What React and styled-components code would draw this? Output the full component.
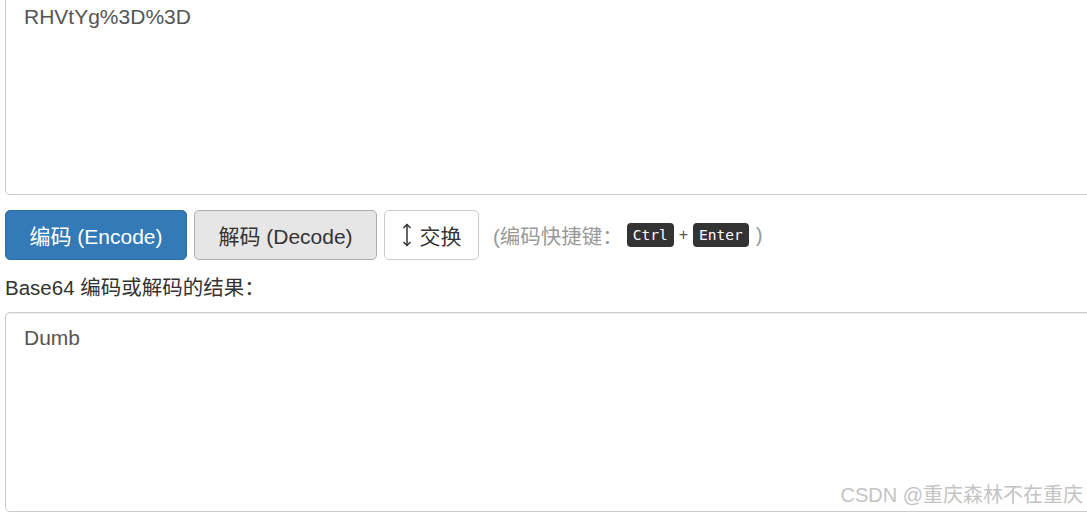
import React from "react";
import styled, { createGlobalStyle } from "styled-components";

const GlobalStyle = createGlobalStyle`
  html, body {
    margin: 0;
    padding: 0;
    background: #fff;
    overflow: hidden;
  }
  body {
    font-family: "Liberation Sans", "Noto Sans CJK SC", sans-serif;
    color: #333;
  }
`;

const Page = styled.div`
  position: relative;
  width: 1087px;
  height: 514px;
  overflow: hidden;
  padding-left: 5px;
  box-sizing: border-box;
`;

const Column = styled.div`
  display: flex;
  flex-direction: column;
  margin-top: -9px;
`;

const Area = styled.textarea`
  display: block;
  width: 1200px;
  height: ${(p) => p.$height}px;
  box-sizing: border-box;
  margin: 0;
  padding: 11px 18px;
  border: 1px solid #ccc;
  border-radius: 5px;
  box-shadow: inset 0 1px 1px rgba(0, 0, 0, 0.075);
  font-family: "Liberation Sans", "Noto Sans CJK SC", sans-serif;
  font-size: 21px;
  line-height: 1.35;
  color: #555;
  resize: none;
  outline: none;
  background: #fff;
`;

const Toolbar = styled.div`
  display: flex;
  align-items: center;
  gap: 7px;
  margin-top: 15px;
`;

const variants = {
  primary: { bg: "#337ab7", border: "#2e6da4", color: "#fff" },
  active: { bg: "#e6e6e6", border: "#adadad", color: "#333" },
  plain: { bg: "#fff", border: "#ccc", color: "#333" },
};

const Button = styled.button`
  display: flex;
  align-items: center;
  justify-content: center;
  gap: 8px;
  height: 50px;
  width: ${(p) => p.$width}px;
  box-sizing: border-box;
  padding: 0;
  border: 1px solid ${(p) => variants[p.$variant].border};
  border-radius: 5px;
  background: ${(p) => variants[p.$variant].bg};
  color: ${(p) => variants[p.$variant].color};
  font-family: "Liberation Sans", "Noto Sans CJK SC", sans-serif;
  font-size: 21px;
  cursor: pointer;
`;

const Hint = styled.span`
  display: flex;
  align-items: center;
  margin-left: 7px;
  font-size: 20.5px;
  color: #999;
`;

const Kbd = styled.kbd`
  display: inline-block;
  padding: 3px 6px 2px;
  margin: 0 4px;
  background: #333;
  color: #fff;
  border-radius: 4px;
  font-family: "DejaVu Sans Mono", "Liberation Mono", monospace;
  font-size: 14.5px;
  line-height: 19px;
`;

const Plus = styled.span`
  font-size: 16px;
  color: #555;
  margin: 0 1px;
`;

const Close = styled.span`
  margin-left: 3px;
`;

const Label = styled.div`
  margin-top: 17px;
  margin-bottom: 13px;
  font-size: 20.5px;
  line-height: 22px;
  color: #333;
`;

const Watermark = styled.div`
  position: absolute;
  right: 4px;
  bottom: 6px;
  font-size: 20px;
  color: #c4c4c4;
  text-shadow: 0 0 2px #fff;
  pointer-events: none;
`;

function SwapIcon() {
  return (
    <svg width="10" height="24" viewBox="0 0 10 24" fill="none">
      <path d="M5 1.5 V22.5" stroke="#333" strokeWidth="1.5" />
      <path d="M1.5 5 L5 1.5 L8.5 5" stroke="#333" strokeWidth="1.5" />
      <path d="M1.5 19 L5 22.5 L8.5 19" stroke="#333" strokeWidth="1.5" />
    </svg>
  );
}

export default function App() {
  return (
    <Page>
      <GlobalStyle />
      <Column>
        <Area $height={204} readOnly value="RHVtYg%3D%3D" />
        <Toolbar>
          <Button $variant="primary" $width={182}>
            编码 (Encode)
          </Button>
          <Button $variant="active" $width={183}>
            解码 (Decode)
          </Button>
          <Button $variant="plain" $width={95}>
            <SwapIcon />
            交换
          </Button>
          <Hint>
            (编码快捷键：
            <Kbd>Ctrl</Kbd>
            <Plus>+</Plus>
            <Kbd>Enter</Kbd>
            <Close>)</Close>
          </Hint>
        </Toolbar>
        <Label>Base64 编码或解码的结果：</Label>
        <Area $height={200} readOnly value="Dumb" />
      </Column>
      <Watermark>CSDN @重庆森林不在重庆</Watermark>
    </Page>
  );
}
